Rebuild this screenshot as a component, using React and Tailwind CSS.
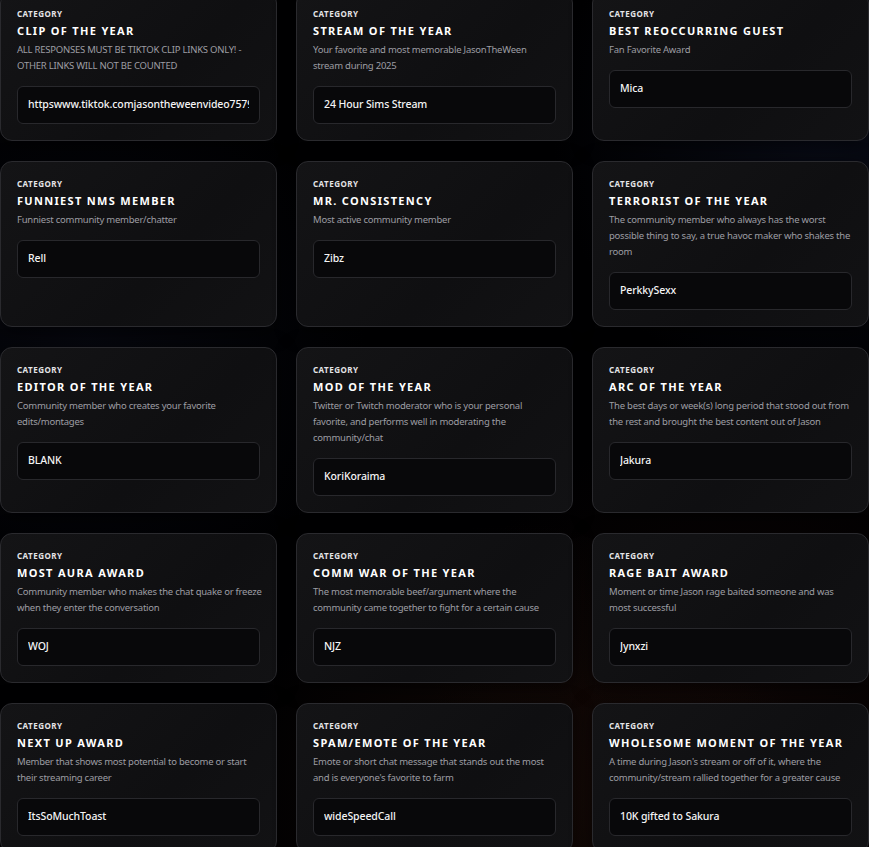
import React from "react";

const cards = [
  { t: "CLIP OF THE YEAR", d: ["ALL RESPONSES MUST BE TIKTOK CLIP LINKS ONLY! -", "OTHER LINKS WILL NOT BE COUNTED"], v: "httpswww.tiktok.comjasontheweenvideo7579483920174638" },
  { t: "STREAM OF THE YEAR", d: ["Your favorite and most memorable JasonTheWeen", "stream during 2025"], v: "24 Hour Sims Stream" },
  { t: "BEST REOCCURRING GUEST", d: ["Fan Favorite Award"], v: "Mica" },
  { t: "FUNNIEST NMS MEMBER", d: ["Funniest community member/chatter"], v: "Rell" },
  { t: "MR. CONSISTENCY", d: ["Most active community member"], v: "Zibz" },
  { t: "TERRORIST OF THE YEAR", d: ["The community member who always has the worst", "possible thing to say, a true havoc maker who shakes the", "room"], v: "PerkkySexx" },
  { t: "EDITOR OF THE YEAR", d: ["Community member who creates your favorite", "edits/montages"], v: "BLANK" },
  { t: "MOD OF THE YEAR", d: ["Twitter or Twitch moderator who is your personal", "favorite, and performs well in moderating the", "community/chat"], v: "KoriKoraima" },
  { t: "ARC OF THE YEAR", d: ["The best days or week(s) long period that stood out from", "the rest and brought the best content out of Jason"], v: "Jakura" },
  { t: "MOST AURA AWARD", d: ["Community member who makes the chat quake or freeze", "when they enter the conversation"], v: "WOJ" },
  { t: "COMM WAR OF THE YEAR", d: ["The most memorable beef/argument where the", "community came together to fight for a certain cause"], v: "NJZ" },
  { t: "RAGE BAIT AWARD", d: ["Moment or time Jason rage baited someone and was", "most successful"], v: "Jynxzi" },
  { t: "NEXT UP AWARD", d: ["Member that shows most potential to become or start", "their streaming career"], v: "ItsSoMuchToast" },
  { t: "SPAM/EMOTE OF THE YEAR", d: ["Emote or short chat message that stands out the most", "and is everyone's favorite to farm"], v: "wideSpeedCall" },
  { t: "WHOLESOME MOMENT OF THE YEAR", d: ["A time during Jason's stream or off of it, where the", "community/stream rallied together for a greater cause"], v: "10K gifted to Sakura" },
];

function Card({ c }) {
  return (
    <div className="flex flex-col rounded-xl border border-[#2a2a2e] bg-[linear-gradient(135deg,#141416_0%,#0f0f11_60%,#121214_100%)] px-4 pt-4 pb-4 shadow-[0_4px_20px_rgba(0,0,0,0.5)]">
      <div className="text-[8px] leading-[12px] font-bold tracking-[0.06em] text-[#e4e4e7] font-['Noto_Sans',sans-serif]">
        CATEGORY
      </div>
      <div className="mt-[3px] text-[11px] leading-4 font-bold tracking-[0.12em] text-white font-['Noto_Sans',sans-serif]">
        {c.t}
      </div>
      <div className="mt-[3px] text-[9.5px] leading-4 tracking-[-0.025em] text-[#9d9da3] font-['Noto_Sans',sans-serif]">
        {c.d.map((l, i) => (
          <div key={i} className="whitespace-nowrap">{l}</div>
        ))}
      </div>
      <div className="mt-3 h-[38px] flex items-center rounded-md border border-[#28282c] bg-[#08080a] px-2.5 text-[10.5px] font-medium tracking-[-0.01em] text-[#f4f4f5] font-['Noto_Sans',sans-serif]">
        <div className="min-w-0 flex-1 overflow-hidden whitespace-nowrap">{c.v}</div>
      </div>
    </div>
  );
}

export default function App() {
  return (
    <div className="relative min-h-screen w-[869px] overflow-hidden bg-[#020203]">
      <div className="pointer-events-none absolute inset-0 bg-[radial-gradient(circle_at_95%_15%,rgba(30,40,80,0.25),transparent_25%),radial-gradient(circle_at_60%_95%,rgba(90,40,20,0.18),transparent_30%),radial-gradient(circle_at_10%_40%,rgba(20,25,50,0.25),transparent_30%),radial-gradient(circle_at_85%_85%,rgba(80,30,20,0.15),transparent_30%)]" />
      <div className="relative -mt-[9px] grid grid-cols-3 gap-x-[19px] gap-y-5">
        {cards.map((c, i) => (
          <Card key={i} c={c} />
        ))}
      </div>
    </div>
  );
}
